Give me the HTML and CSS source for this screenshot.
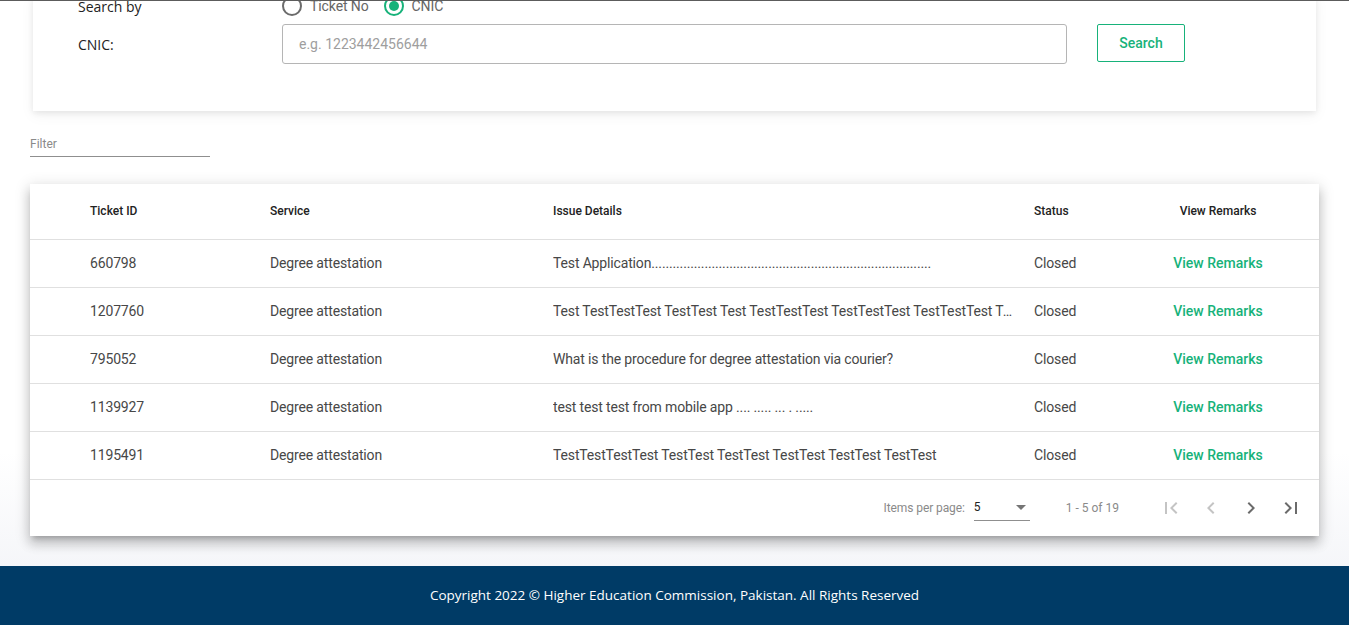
FILE: index.html
```html
<!DOCTYPE html>
<html lang="en">
<head>
<meta charset="utf-8">
<title>Ticket Status</title>
<link rel="stylesheet" href="styles.css">
</head>
<body>
<div class="topline"></div>
<main class="content">
  <section class="search-card">
    <div class="label">Search by</div>
    <div class="radios">
      <label class="radio"><span class="dot"></span>Ticket No</label>
      <label class="radio checked"><span class="dot"></span>CNIC</label>
    </div>
    <div></div>
    <div class="label cnic">CNIC:</div>
    <div class="input">e.g. 1223442456644</div>
    <button class="search-btn">Search</button>
  </section>

  <div class="filter"><span>Filter</span></div>

  <section class="table-card">
    <div class="row head">
      <div>Ticket ID</div>
      <div>Service</div>
      <div>Issue Details</div>
      <div>Status</div>
      <div class="center">View Remarks</div>
    </div>
    <div class="row">
      <div>660798</div>
      <div>Degree attestation</div>
      <div class="issue">Test Application...............................................................................</div>
      <div>Closed</div>
      <div class="center link">View Remarks</div>
    </div>
    <div class="row">
      <div>1207760</div>
      <div>Degree attestation</div>
      <div class="issue">Test TestTestTest TestTest Test TestTestTest TestTestTest TestTestTest TestTestTest TestTest</div>
      <div>Closed</div>
      <div class="center link">View Remarks</div>
    </div>
    <div class="row">
      <div>795052</div>
      <div>Degree attestation</div>
      <div class="issue">What is the procedure for degree attestation via courier?</div>
      <div>Closed</div>
      <div class="center link">View Remarks</div>
    </div>
    <div class="row">
      <div>1139927</div>
      <div>Degree attestation</div>
      <div class="issue">test test test from mobile app .... ..... ... . .....</div>
      <div>Closed</div>
      <div class="center link">View Remarks</div>
    </div>
    <div class="row">
      <div>1195491</div>
      <div>Degree attestation</div>
      <div class="issue">TestTestTestTest TestTest TestTest TestTest TestTest TestTest</div>
      <div>Closed</div>
      <div class="center link">View Remarks</div>
    </div>
    <div class="paginator">
      <span class="ipp">Items per page:</span>
      <div class="select"><span>5</span><svg width="10" height="5" viewBox="0 0 10 5"><path d="M0 0h10L5 5z" fill="#757575"/></svg></div>
      <span class="range">1 - 5 of 19</span>
      <div class="pbtns">
        <button class="pbtn off"><svg viewBox="0 0 24 24" width="24" height="24"><path d="M18.41 16.59L13.82 12l4.59-4.59L17 6l-6 6 6 6zM6 6h2v12H6z" fill="currentColor"/></svg></button>
        <button class="pbtn off"><svg viewBox="0 0 24 24" width="24" height="24"><path d="M15.41 7.41L14 6l-6 6 6 6 1.41-1.41L10.83 12z" fill="currentColor"/></svg></button>
        <button class="pbtn"><svg viewBox="0 0 24 24" width="24" height="24"><path d="M10 6L8.59 7.41 13.17 12l-4.58 4.59L10 18l6-6z" fill="currentColor"/></svg></button>
        <button class="pbtn"><svg viewBox="0 0 24 24" width="24" height="24"><path d="M5.59 7.41L10.18 12l-4.59 4.59L7 18l6-6-6-6zM16 6h2v12h-2z" fill="currentColor"/></svg></button>
      </div>
    </div>
  </section>
</main>
<footer class="footer">Copyright 2022 © Higher Education Commission, Pakistan. All Rights Reserved</footer>
</body>
</html>
```
FILE: styles.css
```css
* { box-sizing: border-box; }
html, body { margin: 0; padding: 0; }
body {
  background: #fff;
  font-family: Roboto, "Liberation Sans", sans-serif;
  color: #333;
  overflow: hidden;
}
.topline {
  position: relative;
  z-index: 2;
  height: 1px;
  background: #5c5c5c;
}
.content {
  padding: 0 30px 30px 30px;
  background: linear-gradient(#fff 0, #fff 80%, #f5f6f9 100%);
}
.search-card {
  margin: -5px 3px 0 3px;
  background: #fff;
  box-shadow: 0 2px 6px rgba(0,0,0,.08), 0 4px 14px rgba(0,0,0,.05);
  display: grid;
  grid-template-columns: 204px 785px auto;
  grid-template-rows: 20px 40px;
  row-gap: 8px;
  align-items: center;
  padding: 0 0 47px 45px;
}
.label {
  font-family: "Open Sans", "Noto Sans", sans-serif;
  font-size: 14px;
  font-weight: 500;
  color: #222;
}
.radios { display: flex; gap: 15px; align-items: center; }
.radio {
  display: flex;
  align-items: center;
  gap: 8px;
  font-size: 14px;
  color: #666;
  letter-spacing: -0.1px;
}
.dot {
  width: 20px; height: 20px;
  border: 2px solid #6b6b6b;
  border-radius: 50%;
  position: relative;
}
.radio.checked .dot { border-color: #17b27a; }
.radio.checked .dot::after {
  content: "";
  position: absolute;
  left: 3px; top: 3px;
  width: 10px; height: 10px;
  border-radius: 50%;
  background: #17b27a;
}
.input {
  height: 40px;
  border: 1px solid #b5b5b5;
  border-radius: 3px;
  padding: 0 16px;
  display: flex;
  align-items: center;
  font-size: 14px;
  color: #9e9e9e;
}
.search-btn {
  align-self: start;
  margin-left: 30px;
  width: 88px;
  height: 38px;
  background: #fff;
  border: 1px solid #17b27a;
  border-radius: 2px;
  color: #17b27a;
  font-family: Roboto, sans-serif;
  font-size: 14px;
  font-weight: 500;
}
.filter {
  margin-top: 24px;
  width: 180px;
  height: 22px;
  border-bottom: 1px solid #8f8f8f;
  font-size: 12px;
  color: #8a8a8a;
  padding-top: 2px;
}
.table-card {
  margin-top: 27px;
  background: #fff;
  box-shadow: 0 5px 5px -3px rgba(0,0,0,.2), 0 8px 10px 1px rgba(0,0,0,.14), 0 3px 14px 2px rgba(0,0,0,.12);
}
.row {
  display: grid;
  grid-template-columns: 180px 283px 481px 104px 1fr;
  padding: 0 21px 0 60px;
  height: 48px;
  align-items: center;
  border-bottom: 1px solid #e0e0e0;
  font-size: 14px;
  color: #474747;
  letter-spacing: -0.15px;
  padding-bottom: 2px;
}
.row.head {
  height: 56px;
  font-size: 12px;
  font-weight: 500;
  color: #222;
  letter-spacing: 0;
  padding-bottom: 1px;
}
.issue {
  white-space: nowrap;
  overflow: hidden;
  text-overflow: ellipsis;
  margin-right: 16px;
}
.center { text-align: center; }
.link { color: #17b27a; font-weight: 500; letter-spacing: 0; }
.paginator {
  height: 56px;
  display: flex;
  align-items: center;
  justify-content: flex-end;
  padding-right: 8px;
  font-size: 12px;
  color: #8a8a8a;
}
.ipp { margin-right: 9px; letter-spacing: -0.1px; }
.select {
  align-self: flex-start;
  margin-top: 14px;
  width: 56px;
  height: 27px;
  border-bottom: 1px solid #8f8f8f;
  display: flex;
  align-items: center;
  justify-content: space-between;
  padding: 0 4px 0 0;
  color: #222;
}
.range { margin: 0 32px 0 36px; }
.pbtns { display: flex; }
.pbtn {
  width: 40px; height: 40px;
  border: 0; background: none; padding: 0;
  display: flex; align-items: center; justify-content: center;
  color: #6b6b6b;
}
.pbtn.off { color: #c4c4c4; }
.footer {
  height: 60px;
  background: #003b66;
  color: #fff;
  display: flex;
  align-items: center;
  justify-content: center;
  font-family: "Open Sans", "Noto Sans", sans-serif;
  font-size: 13.5px;
  padding-bottom: 3px;
}
```
